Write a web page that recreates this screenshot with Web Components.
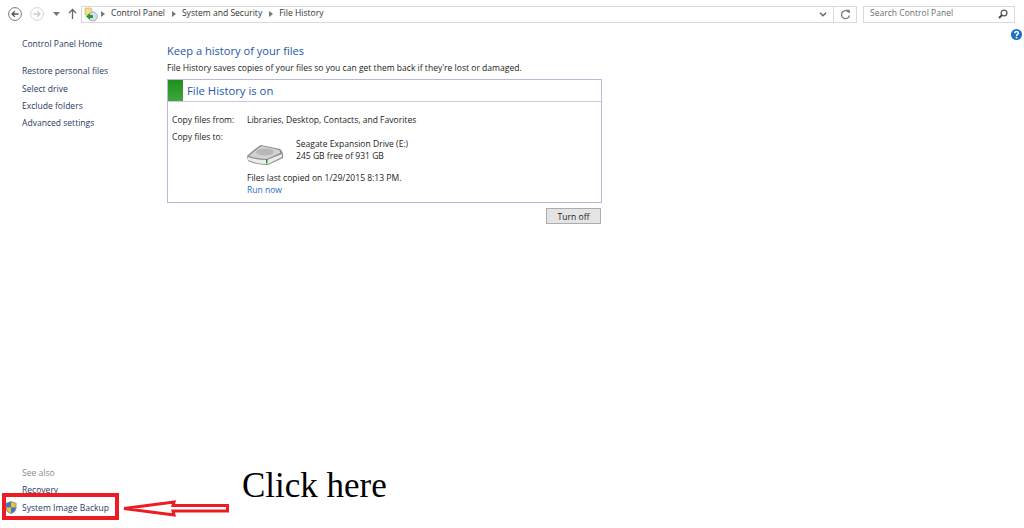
<!DOCTYPE html>
<html>
<head>
<meta charset="utf-8">
<title>File History</title>
<style>
html,body{margin:0;padding:0;height:100%;background:#fff;overflow:hidden}
body{font:8.55px/17px "Open Sans",Lato,sans-serif;color:#1c1c1c}
</style>
</head>
<body>
<cp-window>
  <nav-bar slot="top"></nav-bar>
  <side-panel slot="side"></side-panel>
  <history-page slot="main"></history-page>
</cp-window>
<click-note></click-note>
<script>
// small helper so every element has an open root with its own style
class Base extends HTMLElement {
    constructor() {
        super();
        this.attachShadow({ mode: 'open' }).innerHTML = `<style>${this.constructor.css}</style>${this.constructor.html}`;
    }
}

customElements.define('cp-window', class extends Base {
    static css = `:host{display:flex;flex-direction:column;width:1024px;height:528px}
        .body{flex:1;display:flex;min-height:0;position:relative}
        .help{position:absolute;right:2px;top:2px;width:11px;height:11px}`;
    static html = `<slot name="top"></slot>
        <div class="body"><slot name="side"></slot><slot name="main"></slot>
        <svg class="help" viewBox="0 0 11 11"><circle cx="5.5" cy="5.5" r="5.5" fill="#1b6fc4"/><path d="M3.7 4.2c0-2.3 3.7-2.3 3.7-.2 0 1.4-1.9 1.4-1.9 3" fill="none" stroke="#fff" stroke-width="1.5"/><rect x="4.7" y="7.800" width="1.6" height="1.6" fill="#fff"/></svg></div>`;
});

customElements.define('nav-bar', class extends Base {
    static css = `:host{display:flex;align-items:center;height:27px;padding:0 9px 0 8px;box-sizing:border-box;color:#333}
        svg{display:block;flex:none}
        .btns{display:flex;align-items:center;width:73px;flex:none}
        .addr{flex:1;height:17px;margin-top:1px;border:1px solid #d9d9d9;box-sizing:border-box;display:flex;align-items:center;line-height:15px;padding-left:2px;white-space:nowrap}
        .crumb{margin:0 7px 0 0;position:relative;top:-1px}
        .sep{width:0;height:0;border-left:4px solid #777;border-top:3px solid transparent;border-bottom:3px solid transparent;margin:0 6px 0 0;flex:none}
        .grow{flex:1}
        .cell{width:22px;height:15px;display:flex;align-items:center;justify-content:center;border-left:1px solid #d9d9d9}
        .search{width:152px;height:17px;margin:1px 0 0 6px;flex:none;border:1px solid #d9d9d9;box-sizing:border-box;display:flex;align-items:center;padding:0 6px;line-height:15px;color:#6d6d6d}
        .search span{position:relative;top:-1px}`;
    static html = `<div class="btns">
          <svg width="14" height="14" viewBox="0 0 14 14"><circle cx="7" cy="7" r="6.4" fill="#fff" stroke="#777"/><path d="M10.500 7H4M6.800 4.200 4 7l2.800 2.800" fill="none" stroke="#555" stroke-width="1.3"/></svg>
          <svg style="margin-left:8px" width="14" height="14" viewBox="0 0 14 14"><circle cx="7" cy="7" r="6.4" fill="#fff" stroke="#d4d4d4"/><path d="M3.500 7H10M7.200 4.200 10 7 7.200 9.800" fill="none" stroke="#ccc" stroke-width="1.3"/></svg>
          <svg style="margin-left:9px" width="7" height="4" viewBox="0 0 7 4"><path d="M0 0h7L3.500 4z" fill="#777"/></svg>
          <svg style="margin-left:8px" width="9" height="11" viewBox="0 0 9 11"><path d="M4.500 11V1.500M1 5l3.500-3.500L8 5" fill="none" stroke="#666" stroke-width="1.3"/></svg>
        </div>
        <div class="addr">
          <svg style="margin-right:2px" width="15" height="15" viewBox="0 0 15 15"><path d="M1 1h6l1 2v5H1z" fill="#f3dc8c" stroke="#c9ad55" stroke-width=".6"/><circle cx="9" cy="9.500" r="4.400" fill="#d7e2ee" stroke="#7f93a8" stroke-width=".7"/><path d="M2 9.500 6 6v2h3v3H6v2z" fill="#2f9a2f"/></svg>
          <i class="sep"></i><span class="crumb">Control Panel</span>
          <i class="sep"></i><span class="crumb">System and Security</span>
          <i class="sep"></i><span class="crumb">File History</span>
          <span class="grow"></span>
          <svg style="margin-right:6px" width="8" height="5" viewBox="0 0 8 5"><path d="M1 .8 4 3.800 7 .8" fill="none" stroke="#666" stroke-width="1.4"/></svg>
          <span class="cell"><svg width="11" height="11" viewBox="0 0 11 11"><path d="M8.800 3.400A4 4 0 1 0 9.400 6.500" fill="none" stroke="#777" stroke-width="1.3"/><path d="M6 .5 9.800 1v3.600z" fill="#777"/></svg></span>
        </div>
        <div class="search"><span class="grow">Search Control Panel</span>
          <svg width="10" height="10" viewBox="0 0 10 10"><circle cx="6" cy="4" r="2.900" fill="none" stroke="#555" stroke-width="1.3"/><path d="M4 6 1 9" stroke="#444" stroke-width="1.8"/></svg>
        </div>`;
});

customElements.define('side-panel', class extends Base {
    static css = `:host{display:flex;flex-direction:column;width:167px;flex:none;box-sizing:border-box;padding:9px 0 0 22px;color:#2a3a63}
        a{display:block;height:17.3px;line-height:17px;white-space:nowrap}
        .home{margin-bottom:10px}
        .grow{flex:1}
        .also{color:#8a8a8a}
        .sys{position:relative}
        svg{position:absolute;left:-17px;top:1px}
        .foot{padding-bottom:11px}`;
    static html = `<a class="home">Control Panel Home</a>
        <a>Restore personal files</a><a>Select drive</a><a>Exclude folders</a><a>Advanced settings</a>
        <div class="grow"></div>
        <div class="foot"><a class="also">See also</a><a>Recovery</a>
        <a class="sys"><svg width="12" height="13" viewBox="0 0 12 13"><path d="M6 0 11.500 2v5c0 3-2.500 5-5.500 6C3 12 .5 10 .5 7V2z" fill="#8a8f99"/><path d="M6 1 1.500 2.600V6.500H6z" fill="#3b78c9"/><path d="M6 1 10.500 2.600V6.500H6z" fill="#e8c33a"/><path d="M1.500 6.500H6V12C3.500 11 1.500 9.500 1.500 6.500z" fill="#e8c33a"/><path d="M10.500 6.500H6V12c2.500-1 4.500-2.500 4.500-5.500z" fill="#3b78c9"/></svg>System Image Backup</a></div>`;
});

customElements.define('history-page', class extends Base {
    static css = `:host{display:block;width:435px;padding-top:14px}
        h1{margin:0;font-weight:400;font-size:11.1px;line-height:19px;color:#2458a8}
        p{margin:0;line-height:17px;color:#1c1c1c;white-space:nowrap}
        .foot{display:flex;justify-content:flex-end;padding:5px 1px 0 0}
        button{width:55px;height:16px;padding:1px 0 0;font:inherit;line-height:14px;color:#1c1c1c;background:#e4e4e4;border:1px solid #adadad;box-sizing:border-box}`;
    static html = `<h1>Keep a history of your files</h1>
        <p>File History saves copies of your files so you can get them back if they're lost or damaged.</p>
        <status-card></status-card>
        <div class="foot"><button>Turn off</button></div>`;
});

customElements.define('status-card', class extends Base {
    static css = `:host{display:block;box-sizing:border-box;height:124px;margin-top:2px;border:1px solid #b9b9dc;background:#fff}
        .head{display:flex;align-items:center;height:21px;border-bottom:1px solid #c9c9e4}
        .bar{width:15px;height:21px;background:linear-gradient(#1f8f1f,#3fa73a)}
        h2{margin:0 0 0 4px;font-weight:400;font-size:11.3px;color:#2458a8}
        .body{display:grid;grid-template-columns:75px 1fr;padding:10px 4px 0;line-height:17px}
        .drive{display:flex;align-items:flex-start;height:34px}
        .drive svg{margin:6px 13px 0 0;flex:none}
        .info,.when,.run{line-height:12px}
        .run{color:#1f6fc4}`;
    static html = `<div class="head"><div class="bar"></div><h2>File History is on</h2></div>
        <div class="body">
          <div>Copy files from:</div><div>Libraries, Desktop, Contacts, and Favorites</div>
          <div>Copy files to:</div>
          <div>
            <div style="height:9px"></div>
            <div class="drive">
              <svg width="36" height="22" viewBox="0 0 36 22"><path d="M0 12Q10 3 14 1L33 5Q36 7 36 10V14L21 21Q9 21 1 17Z" fill="#8d8d8d"/><path d="M2 12Q11 4 15 2L32 6Q34 8 33 9L20 15Q10 15 2 12Z" fill="#d2d2d2"/><ellipse cx="18" cy="8" rx="9" ry="3.500" fill="#b8b8b8"/><path d="M1 13Q10 16 20 16L35 10V13L21 20Q10 20 1 16Z" fill="#ececec"/><rect x="19" y="15" width="1.500" height="4.500" fill="#1f9a1f"/></svg>
              <div class="info">Seagate Expansion Drive (E:)<br>245 GB free of 931 GB</div>
            </div>
            <div class="when">Files last copied on 1/29/2015 8:13 PM.</div>
            <div class="run">Run now</div>
          </div>
        </div>`;
});

// the red annotation lies on top of the window
customElements.define('click-note', class extends Base {
    static css = `:host{position:absolute;left:0;top:0;width:1024px;height:528px;pointer-events:none}
        .box{position:absolute;left:2px;top:493px;width:117px;height:27px;box-sizing:border-box;border:4px solid #ed1c24}
        svg{position:absolute;left:122px;top:499px}
        .txt{position:absolute;left:242px;top:465px;font:35px/42px "Liberation Serif",serif;color:#000;white-space:nowrap}`;
    static html = `<div class="box"></div>
        <svg width="108" height="18" viewBox="0 0 108 18"><path d="M2 9.500 52 3 51 6.500H105.500V12H51L52 16z" fill="#fff" stroke="#ed1c24" stroke-width="3"/></svg>
        <div class="txt">Click here</div>`;
});
</script>
</body>
</html>
